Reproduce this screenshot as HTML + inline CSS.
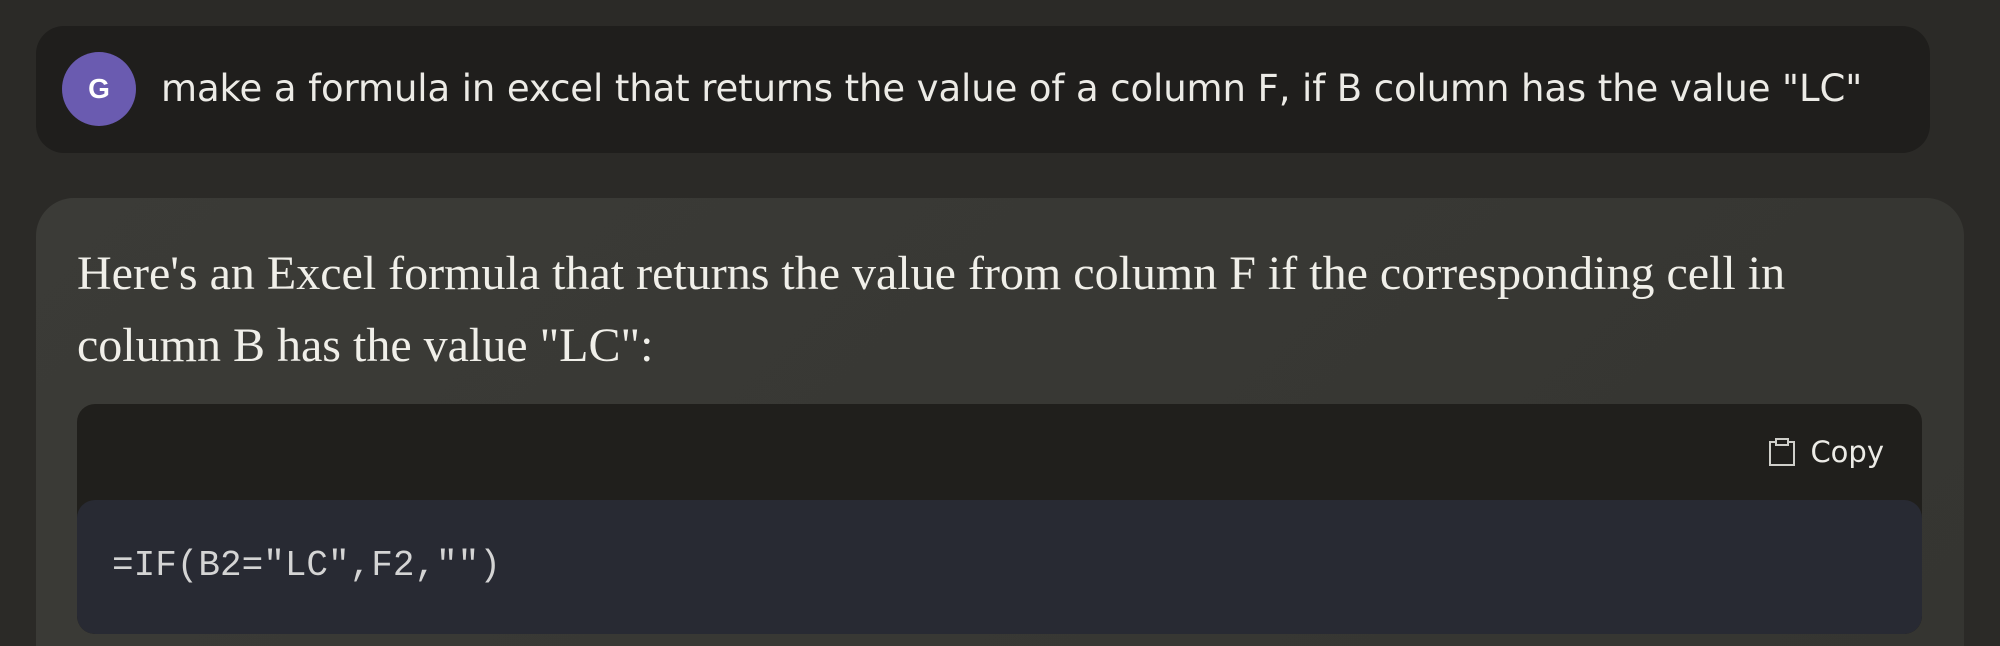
<!DOCTYPE html>
<html><head><meta charset="utf-8"><style>
html,body{margin:0;padding:0;background:#2b2a27;width:2000px;height:646px;overflow:hidden;position:relative}
.bub{position:absolute;left:36px;top:26px;width:1894px;height:127px;background:#1f1e1c;border-radius:28px}
.av{position:absolute;left:62px;top:52px;width:74px;height:74px;border-radius:50%;background:#6a5bb0;color:#fff;font:bold 28px "Liberation Sans",sans-serif;text-align:center;line-height:74px}
.ut{position:absolute;left:161px;top:67px;font:37px/44px "DejaVu Sans","Liberation Sans",sans-serif;color:#ecebe6;white-space:nowrap;letter-spacing:-0.1px}
.card{position:absolute;left:36px;top:198px;width:1928px;height:448px;border-radius:38px 38px 0 0;background:linear-gradient(135deg,#3b3b37,#353531)}
.st{position:absolute;left:77px;font:48px/56px "Liberation Serif",serif;color:#f0efe9;white-space:nowrap}
.code{position:absolute;left:77px;top:404px;width:1845px;height:230px;border-radius:18px;background:#201f1c;overflow:hidden}
.ca{position:absolute;left:0;top:96px;width:100%;height:134px;background:#282a33;border-radius:18px}
.cp{position:absolute;right:38px;top:30px;font:29px/36px "DejaVu Sans",sans-serif;color:#ecebe6}
.ct{position:absolute;left:35px;top:141px;font:36px/42px "Liberation Mono",monospace;color:#d4d4d4;white-space:nowrap}
</style></head><body>
<div class="bub"></div>
<div class="av">G</div>
<div class="ut">make a formula in excel that returns the value of a column F, if B column has the value "LC"</div>
<div class="card"></div>
<div class="st" style="top:246px">Here's an Excel formula that returns the value from column F if the corresponding cell in</div>
<div class="st" style="top:318px">column B has the value "LC":</div>
<div class="code"><div class="ca"></div>
<div class="cp"><svg width="28" height="30" viewBox="0 0 28 30" style="vertical-align:-5px;margin-right:14px"><path d="M8 5H2v23h24V5h-6M8 2h12v6H8z" fill="none" stroke="#cfcfca" stroke-width="2"/></svg>Copy</div>
<div class="ct">=IF(B2="LC",F2,"")</div>
</div>
</body></html>
